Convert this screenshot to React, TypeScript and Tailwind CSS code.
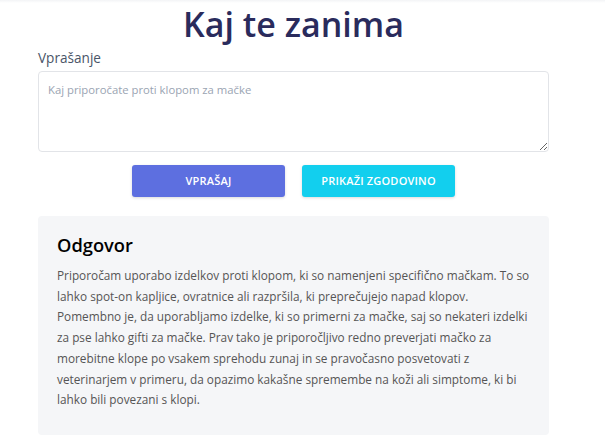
import React, { useState } from 'react';

const answer =
  'Priporočam uporabo izdelkov proti klopom, ki so namenjeni specifično mačkam. To so lahko spot-on kapljice, ovratnice ali razpršila, ki preprečujejo napad klopov. Pomembno je, da uporabljamo izdelke, ki so primerni za mačke, saj so nekateri izdelki za pse lahko gifti za mačke. Prav tako je priporočljivo redno preverjati mačko za morebitne klope po vsakem sprehodu zunaj in se pravočasno posvetovati z veterinarjem v primeru, da opazimo kakašne spremembe na koži ali simptome, ki bi lahko bili povezani s klopi.';

const App: React.FC = () => {
  const [question, setQuestion] = useState('');

  return (
    <div className="min-h-screen bg-white font-['Open_Sans',sans-serif]">
      <div className="h-[3px] bg-gradient-to-b from-gray-100 to-white" />
      <div className="ml-[38px] w-[511px]">
        <h1 className="text-center text-[34px] leading-[42px] font-semibold text-[#2a2b5c]">
          Kaj te zanima
        </h1>

        <label className="mt-[4px] block text-[13.6px] leading-[18px] text-[#4a5568]">
          Vprašanje
        </label>
        <textarea
          value={question}
          onChange={(e) => setQuestion(e.target.value)}
          placeholder="Kaj priporočate proti klopom za mačke"
          className="mt-[4px] block h-[81px] w-full rounded border border-[#e2e4e8] px-[9px] py-[8px] text-[11.3px] leading-[19px] text-gray-700 placeholder:text-[#9aa4b2] focus:outline-none"
        />

        <div className="mt-[13px] flex justify-center gap-[17px]">
          <button className="h-[32px] w-[153px] rounded-[3px] bg-[#5d6fe0] text-[11px] font-semibold uppercase tracking-[0.2px] text-white shadow-[0_1px_3px_rgba(0,0,0,0.15)]">
            Vprašaj
          </button>
          <button className="h-[32px] w-[153px] rounded-[3px] bg-[#12cfee] text-[11px] font-semibold uppercase tracking-[0.2px] text-white shadow-[0_1px_3px_rgba(0,0,0,0.15)]">
            Prikaži zgodovino
          </button>
        </div>

        <div className="mt-[19px] h-[219px] rounded bg-[#f5f6f8] pl-[19px] pr-[16px] pt-[15px]">
          <h2 className="text-[18.3px] leading-[28px] font-semibold text-black">Odgovor</h2>
          <p className="mt-[6px] text-[11.8px] leading-[20.7px] text-[#555]">{answer}</p>
        </div>
      </div>
    </div>
  );
};

export default App;
